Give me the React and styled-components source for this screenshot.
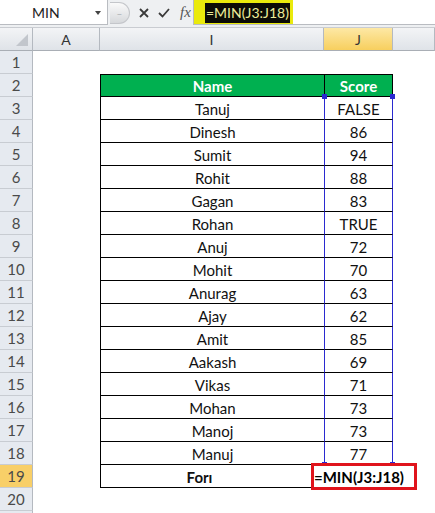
import styled, { createGlobalStyle } from 'styled-components';

const GlobalStyle = createGlobalStyle`
	html, body {
		margin: 0;
		padding: 0;
		background: #ffffff;
		font-family: Lato, 'Open Sans', sans-serif;
	}
	* { box-sizing: border-box; }
`;

const Page = styled.div`
	width: 435px;
	height: 513px;
	overflow: hidden;
	background: #ffffff;
`;

/* formula bar */
const FormulaBar = styled.div`
	height: 28px;
	display: flex;
	align-items: stretch;
	background: #eef0f2;
	border-bottom: 1px solid #c9ccd1;
	padding-bottom: 2px;
`;

const NameBox = styled.div`
	width: 108px;
	display: flex;
	align-items: center;
	background: #ffffff;
	border-right: 1px solid #b9bcc1;
	border-bottom: 1px solid #b9bcc1;
	font-size: 14px;
	color: #222;
	padding-left: 32px;
	position: relative;
`;

const Arrow = styled.span`
	position: absolute;
	right: 6px;
	top: 11px;
	width: 0;
	height: 0;
	border-left: 3px solid transparent;
	border-right: 3px solid transparent;
	border-top: 4px solid #444;
`;

const Buttons = styled.div`
	display: flex;
	align-items: center;
	gap: 9px;
	padding-left: 2px;
	width: 85px;
`;

const Knob = styled.div`
	width: 20px;
	height: 22px;
	border-radius: 0 11px 11px 0;
	background: linear-gradient(#fafafa, #d6d8db);
	border: 1px solid #c4c6ca;
	border-left: none;
	display: flex;
	align-items: center;
	justify-content: center;
	color: #a9adb2;
	font-size: 10px;
`;

const Icon = styled.svg`
	display: block;
	flex: none;
`;

const Fx = styled.span`
	font-family: 'Liberation Serif', serif;
	font-style: italic;
	font-size: 15px;
	color: #555;
	margin-left: 1px;
`;

const Input = styled.div`
	flex: 1;
	display: flex;
	align-items: stretch;
	background: #ffffff;
	border-left: 1px solid #b9bcc1;
	border-bottom: 1px solid #b9bcc1;
`;

const Highlight = styled.div`
	display: flex;
	align-items: center;
	background: #eaea0c;
	padding: 3px 3px 2px 11px;
`;

const HighlightText = styled.span`
	background: #0c0c06;
	color: #ecec9a;
	font-size: 14px;
	line-height: 20px;
	padding: 0 1px;
`;

/* sheet grid */
const Sheet = styled.div`
	display: grid;
	grid-template-columns: 33px 67px 224px 69px 1fr;
	grid-auto-rows: 23px;
	font-size: 15px;
	color: #111;
`;

const ColHead = styled.div`
	display: flex;
	align-items: center;
	justify-content: center;
	font-size: 14px;
	color: #333;
	background: ${p => (p.$active ? 'linear-gradient(#fde8a5, #f7cf5e)' : 'linear-gradient(#f3f4f6, #dfe3e8)')};
	border-right: 1px solid #b4b9c0;
	border-bottom: 1px solid #a9aeb5;
`;

const Corner = styled(ColHead)`
	position: relative;
	&::after {
		content: '';
		position: absolute;
		right: 4px;
		bottom: 4px;
		border-left: 12px solid transparent;
		border-bottom: 12px solid #c2c6cc;
	}
`;

const RowHead = styled.div`
	display: flex;
	align-items: center;
	justify-content: center;
	font-size: 15px;
	color: #4a4a4a;
	background: ${p => (p.$active ? '#f8cf68' : '#e6eaf0')};
	border-right: 1px solid #b4b9c0;
	border-bottom: 1px solid #c8ccd2;
`;

const Blank = styled.div``;

const Cell = styled.div`
	position: relative;
	display: flex;
	align-items: center;
	justify-content: center;
	border-bottom: 1px solid #000;
	border-left: 1px solid ${p => (p.$sel ? '#2a2ad0' : '#000')};
	border-right: ${p => (p.$last ? `1px solid ${p.$sel ? '#2a2ad0' : '#000'}` : 'none')};
	border-top: ${p => (p.$top ? '1px solid #000' : 'none')};
	background: ${p => (p.$head ? '#00b050' : '#ffffff')};
	color: ${p => (p.$head ? '#ffffff' : '#111')};
	font-weight: ${p => (p.$head || p.$bold ? 700 : 400)};
	padding-top: 1px;
`;

const Label = styled.span`
	margin-left: -26px;
`;

const Handle = styled.span`
	position: absolute;
	width: 5px;
	height: 5px;
	background: #2a2ad0;
	${p => (p.$bottom ? 'bottom: -3px;' : 'top: -3px;')}
	${p => (p.$right ? 'right: -3px;' : 'left: -3px;')}
`;

const FormulaBox = styled.div`
	position: absolute;
	left: -14px;
	top: -2px;
	width: 106px;
	height: 27px;
	border: 3px solid #e0141c;
	background: #ffffff;
	display: flex;
	align-items: center;
	font-weight: 700;
	font-size: 15px;
	color: #000;
	white-space: nowrap;
	z-index: 2;
`;

const data = [
	['Tanuj', 'FALSE'],
	['Dinesh', '86'],
	['Sumit', '94'],
	['Rohit', '88'],
	['Gagan', '83'],
	['Rohan', 'TRUE'],
	['Anuj', '72'],
	['Mohit', '70'],
	['Anurag', '63'],
	['Ajay', '62'],
	['Amit', '85'],
	['Aakash', '69'],
	['Vikas', '71'],
	['Mohan', '73'],
	['Manoj', '73'],
	['Manuj', '77'],
];

const EmptyRow = ({ n }) => (
	<>
		<RowHead>{n}</RowHead>
		<Blank />
		<Blank />
		<Blank />
		<Blank />
	</>
);

const App = () => {
	return (
		<Page>
			<GlobalStyle />
			<FormulaBar>
				<NameBox>
					MIN
					<Arrow />
				</NameBox>
				<Buttons>
					<Knob>–</Knob>
					<Icon width="10" height="10" viewBox="0 0 10 10">
						<path d="M1 1 L9 9 M9 1 L1 9" stroke="#3a3a3a" strokeWidth="1.8" />
					</Icon>
					<Icon width="12" height="10" viewBox="0 0 12 10">
						<path d="M1 5 L4.5 8.5 L11 1" stroke="#3a3a3a" strokeWidth="1.8" fill="none" />
					</Icon>
					<Fx>fx</Fx>
				</Buttons>
				<Input>
					<Highlight>
						<HighlightText>=MIN(J3:J18)</HighlightText>
					</Highlight>
				</Input>
			</FormulaBar>

			<Sheet>
				<Corner />
				<ColHead>A</ColHead>
				<ColHead>I</ColHead>
				<ColHead $active>J</ColHead>
				<ColHead />

				<EmptyRow n={1} />

				<RowHead>2</RowHead>
				<Blank />
				<Cell $head $top>Name</Cell>
				<Cell $head $top $last>Score</Cell>
				<Blank />

				{data.map(([name, score], i) => (
					<div key={name} style={{ display: 'contents' }}>
						<RowHead>{i + 3}</RowHead>
						<Blank />
						<Cell>{name}</Cell>
						<Cell $sel $last>
							{score}
							{i === 0 && <Handle />}
							{i === 0 && <Handle $right />}
							{i === data.length - 1 && <Handle $bottom />}
							{i === data.length - 1 && <Handle $bottom $right />}
						</Cell>
						<Blank />
					</div>
				))}

				<RowHead $active>19</RowHead>
				<Blank />
				<Cell $bold>
					<Label>Forı</Label>
				</Cell>
				<Cell $last>
					<FormulaBox>=MIN(J3:J18)</FormulaBox>
				</Cell>
				<Blank />

				<EmptyRow n={20} />
				<EmptyRow n="" />
			</Sheet>
		</Page>
	);
};

export default App;
